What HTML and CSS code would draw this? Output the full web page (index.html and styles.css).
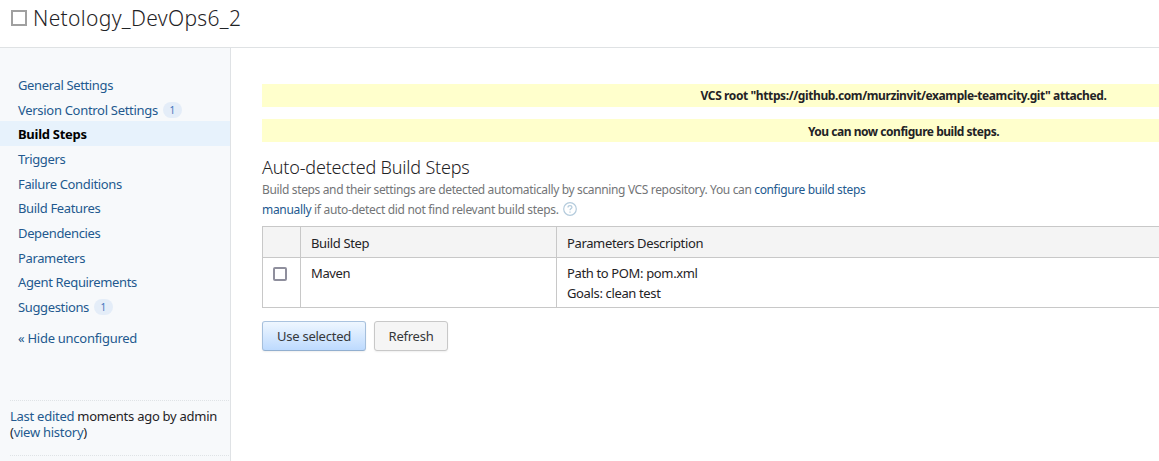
FILE: index.html
```html
<!DOCTYPE html>
<html lang="en">
<head>
<meta charset="utf-8">
<title>Netology_DevOps6_2</title>
<link rel="stylesheet" href="styles.css">
</head>
<body>
<header class="header"><span class="project-icon"></span><h1 class="title">Netology_DevOps6_2</h1></header>
<div class="layout">
  <aside class="sidebar">
    <nav class="nav">
      <a class="item">General Settings</a>
      <a class="item">Version Control Settings<span class="badge">1</span></a>
      <a class="item active">Build Steps</a>
      <a class="item">Triggers</a>
      <a class="item">Failure Conditions</a>
      <a class="item">Build Features</a>
      <a class="item">Dependencies</a>
      <a class="item">Parameters</a>
      <a class="item">Agent Requirements</a>
      <a class="item">Suggestions<span class="badge">1</span></a>
    </nav>
    <a class="toggle">« Hide unconfigured</a>
    <div class="edited"><div><a>Last edited</a> moments ago by admin</div><div>(<a>view history</a>)</div></div>
  </aside>
  <main class="content">
    <div class="message">VCS root "https://github.com/murzinvit/example-teamcity.git" attached.</div>
    <div class="message last">You can now configure build steps.</div>
    <h2 class="heading">Auto-detected Build Steps</h2>
    <div class="note">
      <div>Build steps and their settings are detected automatically by scanning VCS repository. You can <a>configure build steps</a></div>
      <div class="note-line"><span><a>manually</a> if auto-detect did not find relevant build steps.</span><svg class="help" viewBox="0 0 14 14"><circle cx="7" cy="7" r="6.3"/><path d="M5 5.4C5 4.2 5.8 3.6 7 3.6s2 .7 2 1.7C9 6.6 7 6.6 7 8.3M7 9.4v1.3"/></svg></div>
    </div>
    <div class="table">
      <div class="cell head"></div><div class="cell head">Build Step</div><div class="cell head">Parameters Description</div>
      <div class="cell check"><span class="checkbox"></span></div><div class="cell">Maven</div><div class="cell">Path to POM: pom.xml<br>Goals: clean test</div>
    </div>
    <div class="buttons"><button class="btn primary">Use selected</button><button class="btn">Refresh</button></div>
  </main>
</div>
</body>
</html>
```
FILE: styles.css
```css
* { box-sizing: border-box; }
body { margin: 0; height: 461px; overflow: hidden; background: #fff; color: #1f2326; font: 13px/20px "Noto Sans", "Open Sans", sans-serif; letter-spacing: -0.36px; }
a { color: #23598f; }
.header { display: flex; height: 48px; padding: 10px 0 0 11px; border-bottom: 1px solid #dfe2e4; }
.project-icon { width: 16px; height: 16px; margin-right: 6px; border: 2px solid #a0a0a0; }
.title { margin: -5px 0 0; font-size: 21px; line-height: 27px; font-weight: 300; letter-spacing: 0.34px; white-space: nowrap; }
.layout { display: flex; height: 413px; }
.sidebar { flex: none; width: 231px; padding-top: 24.8px; background: #f7f9fb; border-right: 1px solid #dfe2e5; white-space: nowrap; }
.nav { display: flex; flex-direction: column; }
.item { display: flex; align-items: center; height: 24.65px; padding-left: 18px; }
.item:nth-child(2) { letter-spacing: -0.3px; }
.active { height: 25px; margin: -0.6px 0 0.25px; color: #000; background: #e7f2fc; font-weight: 700; letter-spacing: -0.28px; }
.badge { width: 19px; height: 16px; margin-left: 5px; border-radius: 8px; background: #e4edf8; color: #3f74bd; font-size: 10px; line-height: 16px; letter-spacing: 0; text-align: center; }
.toggle { display: block; margin: 8.7px 0 0 18px; letter-spacing: -0.27px; }
.edited { margin: 52px 1px 0 10px; padding-top: 7px; height: 56px; line-height: 16px; letter-spacing: -0.26px; border-top: 1px dotted #dfe3e6; border-bottom: 1px dotted #dfe3e6; }
.content { flex: 1; min-width: 0; padding: 36px 0 0 31px; overflow: hidden; }
.message { width: 1283px; height: 23px; margin-bottom: 12px; background: #ffffcc; font-size: 12px; line-height: 24px; font-weight: 700; letter-spacing: -0.4px; text-align: center; }
.last { line-height: 26px; letter-spacing: -0.47px; }
.heading { margin: 13px 0 1px; font-size: 18px; line-height: 24px; font-weight: 300; letter-spacing: -0.18px; white-space: nowrap; }
.note { color: #737577; font-size: 12px; letter-spacing: -0.355px; white-space: nowrap; }
.note-line { display: flex; letter-spacing: -0.32px; }
.help { width: 14px; height: 14px; margin: 2px 0 0 4px; fill: none; stroke: #b4cbdc; stroke-width: 1.2; }
.table { display: grid; grid-template-columns: 38px 256px 989px; grid-template-rows: 31px 50px; width: 1283px; height: 82px; margin-top: 6px; border: solid #c8c8c8; border-width: 1px 0 0 1px; }
.cell { padding: 5px 10px; border: solid #c8c8c8; border-width: 0 1px 1px 0; }
.head { padding-top: 6px; background: #f4f4f4; }
.check { padding-top: 9px; }
.checkbox { display: block; width: 14px; height: 14px; border: 2px solid #8f8f9d; border-radius: 2px; background: #fff; }
.buttons { display: flex; gap: 8px; margin-top: 13px; }
.btn { width: 74px; height: 30px; padding: 0; border: 1px solid #c8c8c8; border-radius: 3px; background: #f5f5f5; color: #36383a; font: inherit; letter-spacing: -0.25px; box-shadow: 0 1px 2px #0001; }
.primary { width: 104px; border-color: #aac3df #a5bfdc #92afcf; background: linear-gradient(#eff7ff, #bddafe); }
```
